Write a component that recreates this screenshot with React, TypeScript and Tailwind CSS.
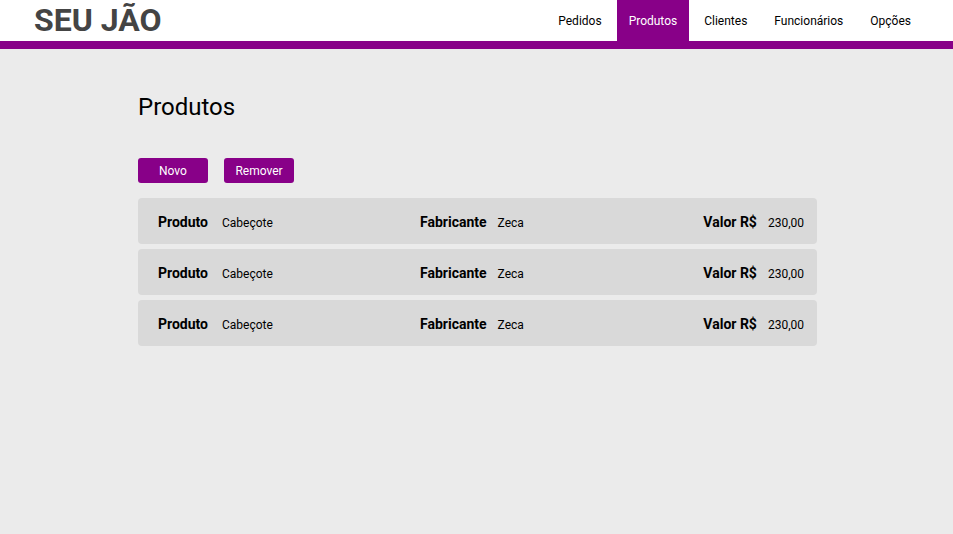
import React from "react";

const tabs = ["Pedidos", "Produtos", "Clientes", "Funcionários", "Opções"];

const produtos = [
  { nome: "Cabeçote", fabricante: "Zeca", valor: "230,00" },
  { nome: "Cabeçote", fabricante: "Zeca", valor: "230,00" },
  { nome: "Cabeçote", fabricante: "Zeca", valor: "230,00" },
];

function Navbar() {
  return (
    <div className="flex h-[49px] items-start justify-between border-b-8 border-[#880088] bg-white pl-[34px] pr-[30px]">
      <h1 className="text-[32px] font-bold leading-[41px] text-[#444444]">SEU JÃO</h1>
      <nav className="flex h-[41px] gap-[3px]">
        {tabs.map((t) => (
          <a
            key={t}
            href="#"
            className={
              t === "Produtos"
                ? "flex h-full items-center bg-[#880088] px-[12px] text-[12px] text-white"
                : "flex h-full items-center px-[12px] text-[12px] text-black"
            }
          >
            {t}
          </a>
        ))}
      </nav>
    </div>
  );
}

export default function App() {
  return (
    <div className="min-h-[534px] bg-[#ebebeb]" style={{ fontFamily: "Roboto, sans-serif" }}>
      <Navbar />
      <div className="flex justify-center pl-[2px]">
        <main className="w-[679px] pt-[44px]">
          <h2 className="text-[24px] leading-[28px] text-black">Produtos</h2>

          <div className="mt-[37px] flex gap-[16px]">
            <button className="h-[25px] w-[70px] rounded-[3px] bg-[#880088] text-[12px] text-white">Novo</button>
            <button className="h-[25px] w-[70px] rounded-[3px] bg-[#880088] text-[12px] text-white">Remover</button>
          </div>

          <div className="mt-[15px] flex flex-col gap-[5px]">
            {produtos.map((p, i) => (
              <div
                key={i}
                className="grid h-[46px] grid-cols-[262px_1fr_auto] items-center rounded-[4px] bg-[#d9d9d9] pl-[20px] pr-[13px] pt-[3px]"
              >
                <div className="flex items-baseline gap-[14px]">
                  <span className="text-[14px] font-bold">Produto</span>
                  <span className="text-[12px]">{p.nome}</span>
                </div>
                <div className="flex items-baseline gap-[11px]">
                  <span className="text-[14px] font-bold">Fabricante</span>
                  <span className="text-[12px]">{p.fabricante}</span>
                </div>
                <div className="flex items-baseline gap-[11px]">
                  <span className="text-[14px] font-bold">Valor R$</span>
                  <span className="text-[12px]">{p.valor}</span>
                </div>
              </div>
            ))}
          </div>
        </main>
      </div>
    </div>
  );
}
